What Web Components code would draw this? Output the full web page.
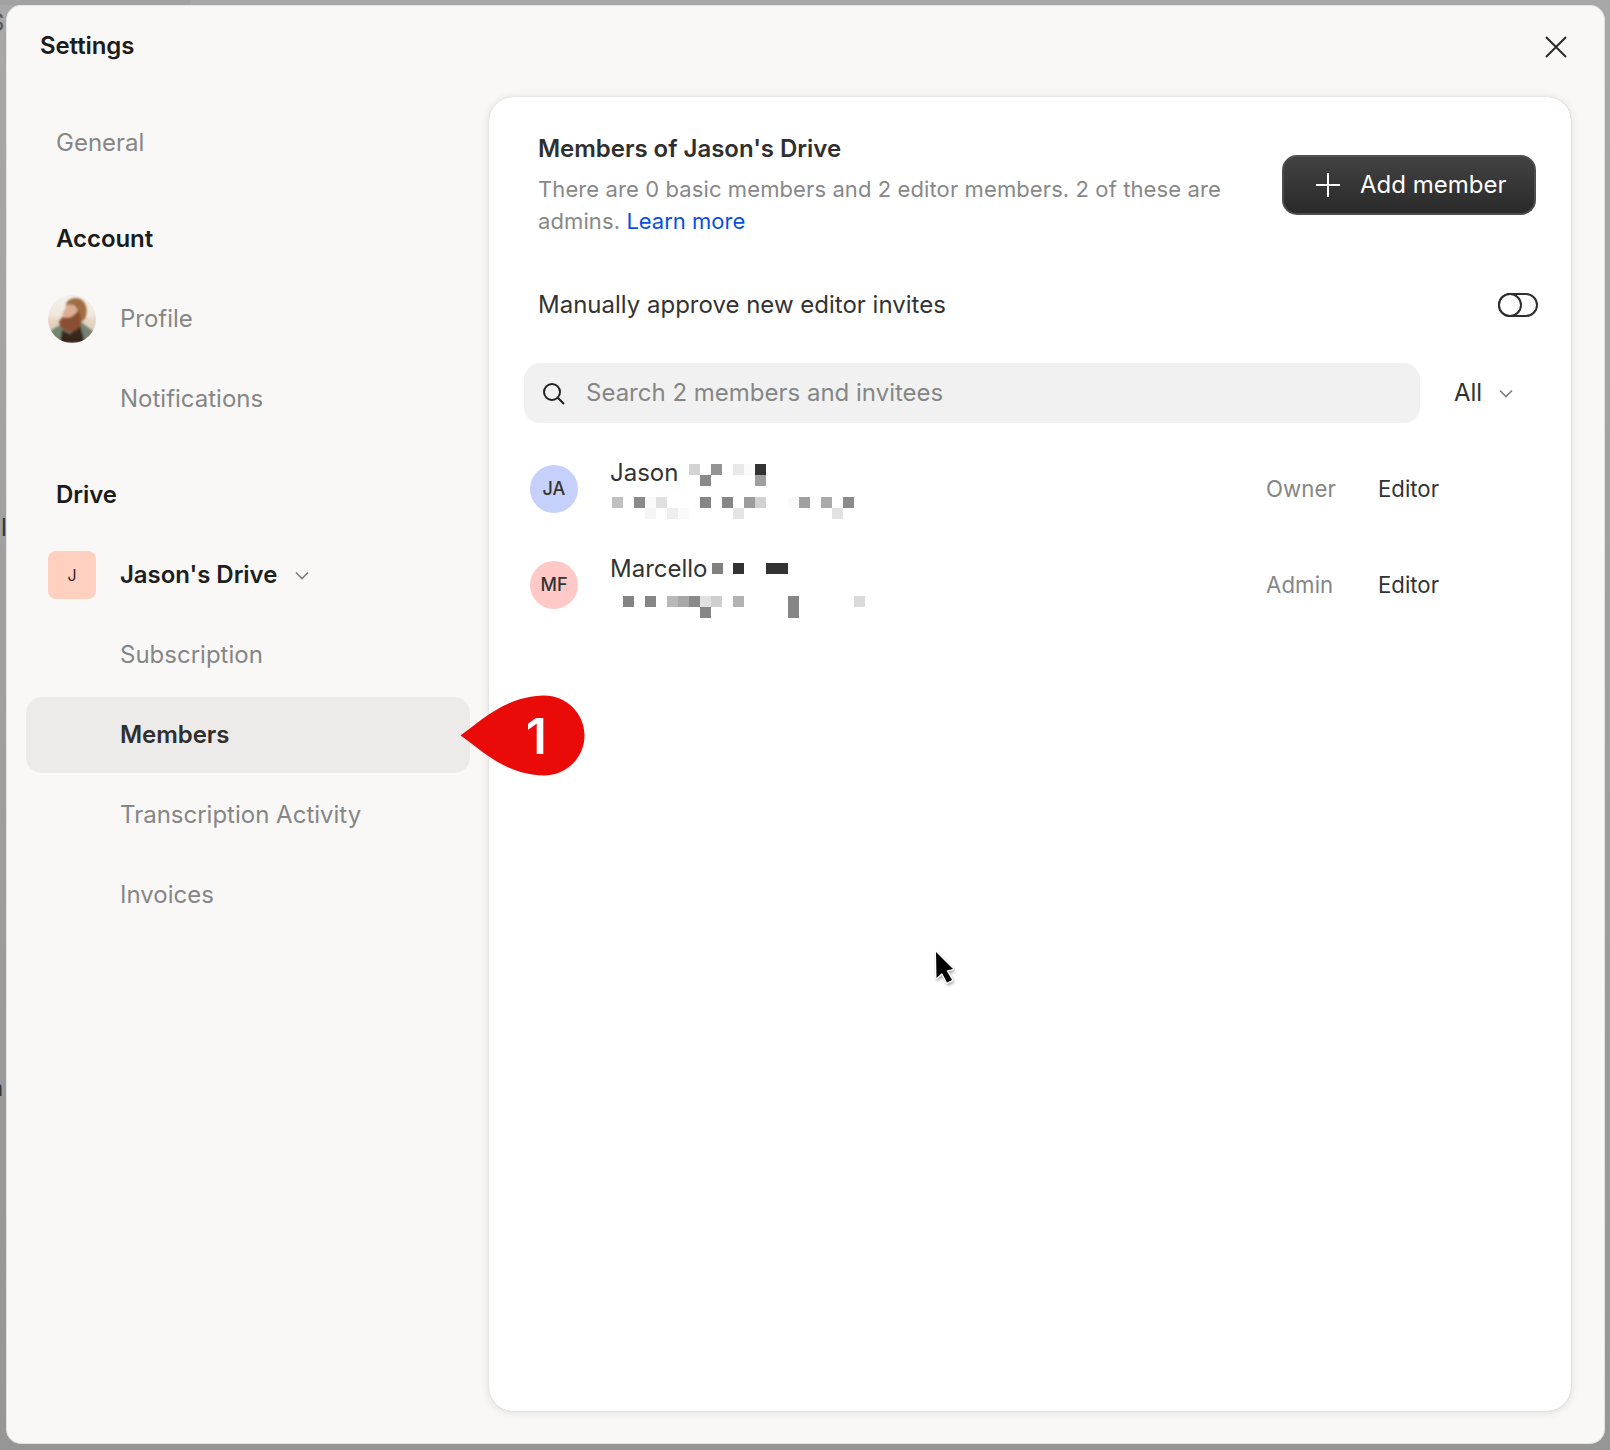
<!DOCTYPE html>
<html lang="en"><head><meta charset="utf-8"><title>Settings</title>
<style>html,body{margin:0;padding:0;background:#a0a0a0}body{font-family:Inter,"Liberation Sans",sans-serif}</style>
</head><body>
<settings-page>
  <settings-modal>
    <settings-nav slot="nav">
      <nav-item>General</nav-item>
      <nav-item kind="section" class="gap">Account</nav-item>
      <nav-item><user-photo slot="icon"></user-photo>Profile</nav-item>
      <nav-item indent>Notifications</nav-item>
      <nav-item kind="section" class="gap">Drive</nav-item>
      <nav-item kind="drive"><drive-tile slot="icon">J</drive-tile>Jason's Drive<chev-icon slot="after"></chev-icon></nav-item>
      <nav-item indent>Subscription</nav-item>
      <nav-item indent active>Members</nav-item>
      <nav-item indent>Transcription Activity</nav-item>
      <nav-item indent>Invoices</nav-item>
    </settings-nav>
    <members-panel slot="panel">
      <member-row initials="JA" name="Jason" role="Owner" color="#c5d1fa" blocks="179,24,d3d3d3;201,24,949494;223,24,e9e9e9;234,24,fbfbfb;245,24,333333;190,35,8a8a8a;245,35,9f9f9f;102,57,c0c0c0;124,57,8a8a8a;135,57,fafafa;146,57,e0e0e0;190,57,868686;212,57,868686;234,57,9c9c9c;245,57,d2d2d2;278,57,fafafa;289,57,a0a0a0;311,57,aaaaaa;333,57,8a8a8a;135,68,f6f6f6;157,68,eeeeee;168,68,fafafa;223,68,e4e4e4;322,68,e2e2e2"></member-row>
      <member-row initials="MF" name="Marcello" role="Admin" color="#ffc9c7" blocks="202,27,808080;223,27,333333;256,27,333333;267,27,333333;113,60,848484;135,60,868686;157,60,b8b8b8;168,60,a8a8a8;179,60,8a8a8a;190,60,e0e0e0;201,60,cfcfcf;223,60,b2b2b2;278,60,868686;344,60,dadada;190,71,868686;278,71,868686"></member-row>
    </members-panel>
  </settings-modal>
</settings-page>
<script>
const def=(n,html,init)=>customElements.define(n,class extends HTMLElement{
  constructor(){super();this.attachShadow({mode:'open'}).innerHTML=typeof html==='function'?html(this):html;}
  connectedCallback(){if(init)init(this,this.shadowRoot);}
});

def('settings-page',`<style>
:host{display:block;position:relative;width:1610px;height:1450px;box-sizing:border-box;padding:5px 5px 6px 6px;overflow:hidden;background:linear-gradient(#a8a8a8,#969696)}
.top{position:absolute;left:0;top:0;width:190px;height:5px;background:#a2a2a2}
.bg{position:absolute;font:400 24px Inter,sans-serif;color:#333}
.cursor{position:absolute;left:936px;top:952px;width:24px;height:36px;overflow:visible}
</style>
<div class="top"></div>
<span class="bg" style="left:-11px;top:8px;color:#555">S</span>
<span class="bg" style="left:1px;top:513px">l</span>
<span class="bg" style="left:-11px;top:1073px">n</span>
<slot></slot>
<svg class="cursor" viewBox="0 0 24 36"><defs><filter id="s" x="-50%" y="-50%" width="200%" height="200%"><feDropShadow dx="1" dy="2" stdDeviation="1.6" flood-opacity=".35"/></filter></defs>
<path d="M0 0L17 17 10.500 18.500 16 28 11 30.500 6 21 .5 26Z" fill="#000" stroke="#fff" stroke-width="2" stroke-linejoin="round" paint-order="stroke" filter="url(#s)"/></svg>`);

def('settings-modal',`<style>
:host{display:flex;flex-direction:column;height:1439px;box-sizing:border-box;background:#f9f8f6;border:1px solid #e2e2e0;border-top-color:#e6e6e4;border-radius:15px;position:relative;color:#1b1b1b}
header{display:flex;align-items:center;justify-content:space-between;height:91px;padding:0 37px 0 33px;box-sizing:border-box;flex:none;padding-bottom:11px}
h1{margin:0;font:600 24px/32px Inter,sans-serif;color:#1c1c1c;letter-spacing:-.1px}
.x{width:22px;height:22px;display:block;margin-top:2px}
.body{flex:1;display:flex;min-height:0;padding:0 33px 32px 19px;gap:19px}
::slotted([slot=nav]){width:444px;flex:none}
::slotted([slot=panel]){flex:1;min-width:0}
</style>
<header><h1>Settings</h1>
<svg class="x" viewBox="0 0 22 22" fill="none" stroke="#2b2b2b" stroke-width="2"><path d="M1 1L21 21M21 1L1 21"/></svg></header>
<div class="body"><slot name="nav"></slot><slot name="panel"></slot></div>`);

def('settings-nav',`<style>:host{display:flex;flex-direction:column;gap:4px;padding-top:8px;box-sizing:border-box}
::slotted(.gap){margin-top:16px}</style><slot></slot>`);

def('nav-item',`<style>
:host{display:flex;align-items:center;height:76px;box-sizing:border-box;padding-left:30px;border-radius:16px;font:400 24px/32px Inter,sans-serif;color:#868686}
:host([indent]){padding-left:94px}
:host([kind=section]){font-weight:600;color:#1b1b1b;letter-spacing:-.05px}
:host([kind=drive]){font-weight:600;color:#1f1f1f;padding-left:22px;letter-spacing:-.05px}
:host([active]){background:#ecebe9;color:#2f2f2f;font-weight:600;letter-spacing:-.05px}
::slotted([slot=icon]){margin-right:24px;flex:none}
::slotted([slot=after]){margin-left:18px}
</style><slot name="icon"></slot><slot></slot><slot name="after"></slot>`,(el)=>{
  if(el.querySelector('user-photo')){el.style.paddingLeft='22px';}
});

def('user-photo',`<style>:host{display:block;width:48px;height:48px;border-radius:50%;overflow:hidden}svg{display:block;width:48px;height:48px}</style>
<svg viewBox="0 0 48 48"><defs><filter id="b"><feGaussianBlur stdDeviation="1"/></filter><linearGradient id="sky" x1="0" y1="0" x2="0" y2="1"><stop offset="0" stop-color="#f4f1ec"/><stop offset=".42" stop-color="#f0e8de"/><stop offset=".55" stop-color="#e6d3bf"/><stop offset="1" stop-color="#d8d2c6"/></linearGradient></defs>
<rect width="48" height="48" fill="url(#sky)"/>
<g filter="url(#b)">
<path d="M-2 48V39L8 32 17 29 33 27 41 33 50 40V48Z" fill="#75836f"/>
<path d="M12 48L14 35 22 39 32 30 37 48Z" fill="#38271f"/>
<path d="M18 9C20 3 29 1 34 5 39 9 40 16 37 24L33 27 31 18C28 13 24 10 18 11Z" fill="#9f6e42"/>
<path d="M19 9.500L26 10C30 14 32 20 32 25L24 27 16 23 14 19 16 16Z" fill="#dcae93"/>
<path d="M14 22C20 24 24 22 27 19L31 15 33 24C34 30 31 35 24 37 17 37 11 32 11 27Z" fill="#8a5030"/>
</g></svg>`);

def('drive-tile',`<style>:host{display:flex;align-items:center;justify-content:center;width:48px;height:48px;border-radius:8px;background:#ffd0c0;color:#3a2a26;font:400 16px/1 Inter,sans-serif}</style><slot></slot>`);

def('chev-icon',`<style>:host{display:block;width:14px;height:9px}svg{display:block}</style>
<svg width="14" height="9" viewBox="0 0 14 9" fill="none" stroke="#7d7d7d" stroke-width="1.600"><path d="M1 1.500L7 7.500 13 1.500"/></svg>`);

def('toggle-switch',`<style>:host{display:block;width:40px;height:24px;box-sizing:border-box;border:2px solid #2e2e2e;border-radius:12px;position:relative}
i{position:absolute;left:-2px;top:-2px;width:24px;height:24px;box-sizing:border-box;border:2px solid #2e2e2e;border-radius:50%;background:#fff}</style><i></i>`);

def('primary-button',`<style>:host{display:flex;align-items:center;width:254px;height:60px;box-sizing:border-box;border-radius:15px;border:2px solid #4d4d4d;border-top-color:#505050;background:linear-gradient(#424242,#2a2a2a);color:#fff;font:400 24px/32px Inter,sans-serif;padding-left:32px;gap:20px;flex:none}
svg{display:block;flex:none}</style>
<svg width="24" height="24" viewBox="0 0 24 24" stroke="#fff" stroke-width="2"><path d="M12 0V24M0 12H24"/></svg><slot></slot>`);

def('search-box',`<style>:host{display:flex;align-items:center;height:60px;box-sizing:border-box;background:#f1f1f1;border-radius:16px;padding-left:17.500px;flex:1;min-width:0;font:400 24px/32px Inter,sans-serif;color:#868686;gap:21.500px}
svg{display:block;flex:none}</style>
<svg width="23" height="23" viewBox="0 0 23 23" fill="none" stroke="#1f1f1f" stroke-width="2"><circle cx="10" cy="10" r="8"/><path d="M15.800 15.800L22 22"/></svg><slot></slot>`);

def('members-panel',`<style>
:host{display:block;background:#fff;border-radius:24px;box-shadow:0 0 1px rgba(0,0,0,.22),0 1px 9px rgba(0,0,0,.12);padding:36px 33px 0 35px;box-sizing:border-box;position:relative;font:400 24px/32px Inter,sans-serif;color:#333}
.head{display:flex;align-items:center;justify-content:space-between;padding:0 2px 0 14px}
h2{margin:0;font:600 24px/32px Inter,sans-serif;color:#2f2f2f;letter-spacing:-.03px}
p{margin:9px 0 0;font:400 22px/31.500px Inter,sans-serif;color:#888;letter-spacing:.1px}
p span{display:block;white-space:nowrap}
a{color:#0a4fe0;text-decoration:none;letter-spacing:0}
.opt{display:flex;align-items:center;justify-content:space-between;height:40px;margin-top:48px;padding-left:14px}
.find{display:flex;align-items:center;margin-top:38px}
.all{display:flex;align-items:center;margin-left:34px;width:84px;gap:17px;color:#2f2f2f}
.list{margin-top:18px;display:block}
</style>
<div class="head"><div><h2>Members of Jason's Drive</h2><p><span>There are 0 basic members and 2 editor members. 2 of these are</span><span>admins. <a>Learn more</a></span></p></div>
<primary-button>Add member</primary-button></div>
<div class="opt"><span>Manually approve new editor invites</span><toggle-switch></toggle-switch></div>
<div class="find"><search-box>Search 2 members and invitees</search-box><div class="all">All<chev-icon></chev-icon></div></div>
<div class="list"><slot></slot></div>
<callout-pin>1</callout-pin>`);

def('callout-pin',`<style>:host{position:absolute;left:-29px;top:598px;width:125px;height:81px;display:block}
svg{position:absolute;inset:0}
span{position:absolute;left:0;top:0;width:110px;height:81px;display:flex;align-items:center;justify-content:flex-end;box-sizing:border-box;padding-right:23px;color:#fff;font:600 50px/1 Inter,sans-serif}
</style><svg width="125" height="81" viewBox="0 0 125 81"><path d="M0.500 40.500C18 29 44 1 84 0.500 106 0.500 124.500 18 124.500 40.500 124.500 63 106 80.500 84 80.500 44 80 18 52 0.500 40.500Z" fill="#ea0a08"/></svg><span><slot></slot></span>`);

def('member-row',(h)=>{
  const g=n=>h.getAttribute(n)||'';
  const rects=g('blocks').split(';').filter(Boolean).map(s=>{const [x,y,c]=s.split(',');return `<rect x="${x}" y="${y}" width="11" height="11" fill="#${c}"/>`}).join('');
  return `<style>
:host{display:block;position:relative;height:96px;font:400 24px/32px Inter,sans-serif;color:#333}
.row{display:flex;align-items:center;height:96px;padding-left:6px}
.av{width:48px;height:48px;border-radius:50%;display:flex;align-items:center;justify-content:center;font:500 18px/1 Inter,sans-serif;color:#333;flex:none;margin-right:32px}
.name{flex:1;transform:translateY(-16px)}
.role{width:112px;font-size:22.200px;color:#868686;letter-spacing:.1px}
.ed{width:160px;font-size:22.200px;color:#333}
svg{position:absolute;left:-14px;top:-1px;overflow:visible}
</style><div class="row"><div class="av" style="background:${g('color')}">${g('initials')}</div><div class="name">${g('name')}</div><div class="role">${g('role')}</div><div class="ed">Editor</div></div>
<svg width="360" height="96" shape-rendering="crispEdges">${rects}</svg>`;
});
</script>
</body></html>
